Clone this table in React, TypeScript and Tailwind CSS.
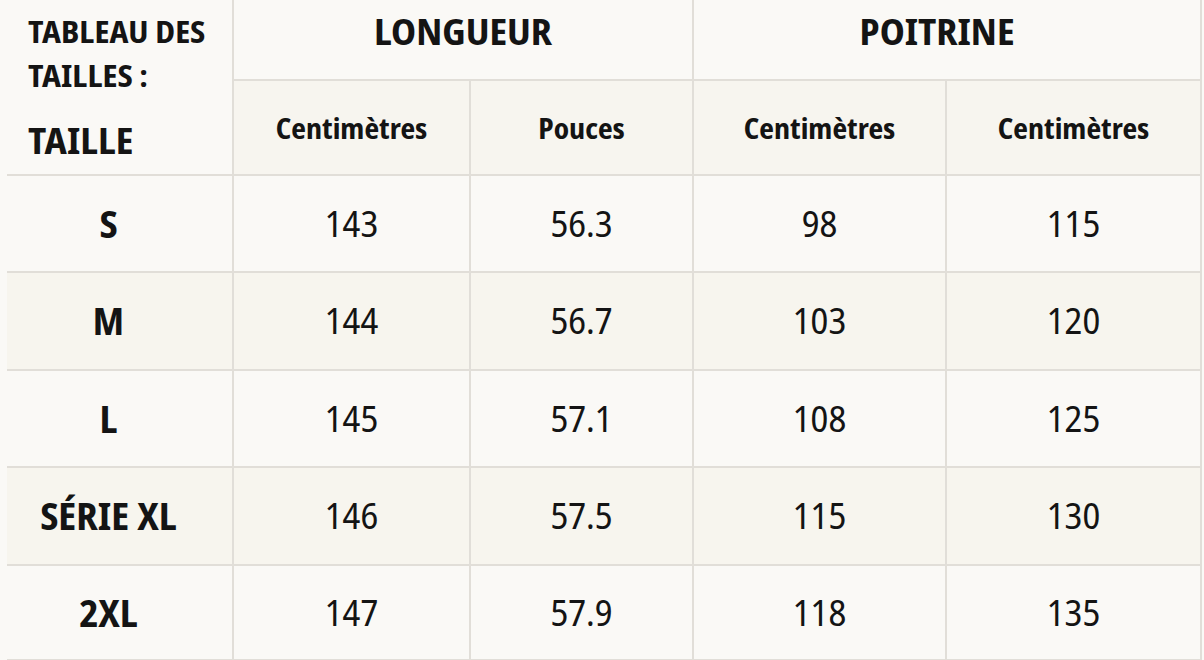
const rows = [
  { size: "S", values: ["143", "56.3", "98", "115"], tint: false, h: "h-[97px]" },
  { size: "M", values: ["144", "56.7", "103", "120"], tint: true, h: "h-[98px]" },
  { size: "L", values: ["145", "57.1", "108", "125"], tint: false, h: "h-[97px]" },
  { size: "SÉRIE XL", values: ["146", "57.5", "115", "130"], tint: true, h: "h-[98px]" },
  { size: "2XL", values: ["147", "57.9", "118", "135"], tint: false, h: "h-[95px]" },
];

const cell = "border-r-2 border-b-2 border-[#e1ded8]";

export default function App() {
  return (
    <div
      className="w-[1204px] h-[660px] overflow-hidden bg-[#faf9f6] pl-[7px] text-[#141414] font-stretch-[80%]"
      style={{ fontFamily: '"Noto Sans Display", "Noto Sans", sans-serif' }}
    >
      <table className="table-fixed border-collapse w-[1194px]">
        <colgroup>
          <col className="w-[226px]" />
          <col className="w-[237px]" />
          <col className="w-[223px]" />
          <col className="w-[253px]" />
          <col className="w-[255px]" />
        </colgroup>
        <thead>
          <tr className="h-[80px]">
            <th rowSpan={2} className={`${cell} text-left align-top pl-[21px] pt-[9px] font-bold`}>
              <div className="text-[31px] leading-[44px]">
                TABLEAU DES
                <br />
                TAILLES :
              </div>
              <div className="text-[36.5px] leading-[40px] mt-[23px]">TAILLE</div>
            </th>
            <th colSpan={2} className={`${cell} text-[36.5px] font-bold pb-[16px]`}>
              LONGUEUR
            </th>
            <th colSpan={2} className={`${cell} text-[36.5px] font-bold pb-[16px] pr-[20px]`}>
              POITRINE
            </th>
          </tr>
          <tr className="h-[95px] bg-[#f7f5ef]">
            <th className={`${cell} text-[28px] font-bold`}>Centimètres</th>
            <th className={`${cell} text-[28px] font-bold`}>Pouces</th>
            <th className={`${cell} text-[28px] font-bold`}>Centimètres</th>
            <th className={`${cell} text-[28px] font-bold`}>Centimètres</th>
          </tr>
        </thead>
        <tbody>
          {rows.map((r) => (
            <tr key={r.size} className={`${r.h} ${r.tint ? "bg-[#f7f5ee]" : ""}`}>
              <td className={`${cell} text-center text-[37px] font-bold pr-[22px]`}>{r.size}</td>
              {r.values.map((v, i) => (
                <td key={i} className={`${cell} text-center text-[36px] font-normal`}>
                  {v}
                </td>
              ))}
            </tr>
          ))}
        </tbody>
      </table>
    </div>
  );
}
